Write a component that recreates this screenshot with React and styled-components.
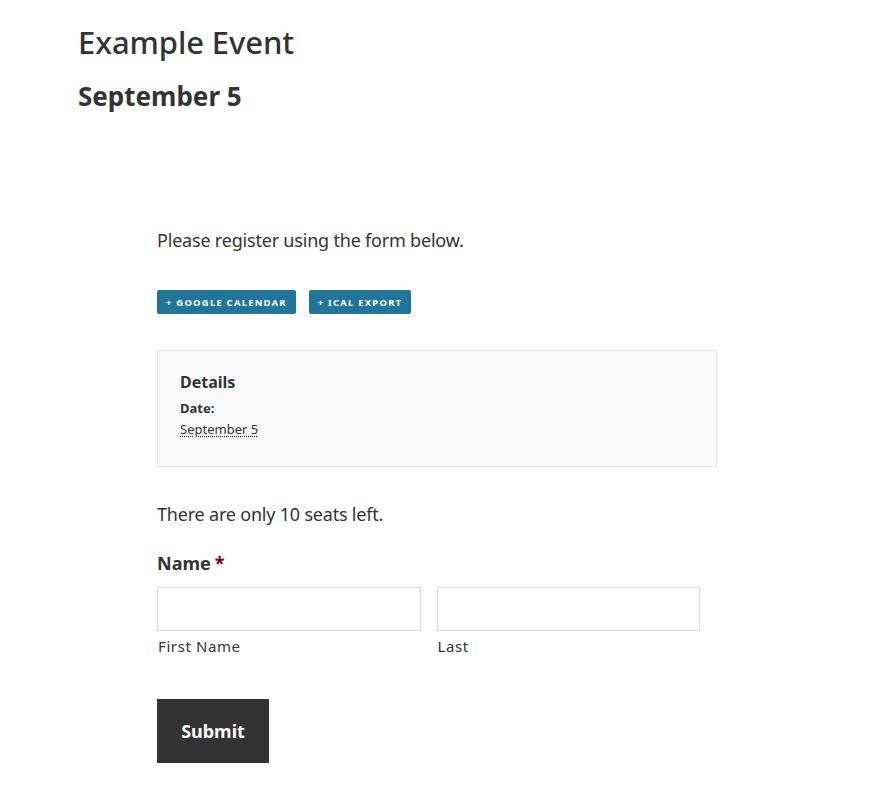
import React from "react";
import styled, { createGlobalStyle } from "styled-components";

const Global = createGlobalStyle`
  html, body { margin: 0; padding: 0; background: #fff; }
  body { font-family: "Source Sans Pro", "Noto Sans", "Open Sans", sans-serif; color: #333; }
  * { box-sizing: border-box; }
`;

const Page = styled.div`
  padding: 22px 0 40px 78px;
`;

const Title = styled.h1`
  margin: 0;
  font-size: 31px;
  font-weight: 500;
  line-height: 40px;
  letter-spacing: -0.1px;
`;

const DateHeading = styled.h2`
  margin: 17px 0 0;
  font-size: 26px;
  font-weight: 700;
  line-height: 34px;
  letter-spacing: 0;
`;

const Content = styled.div`
  margin: 113px 0 0 79px;
  width: 560px;
`;

const Para = styled.p`
  margin: 0;
  font-size: 18px;
  line-height: 28px;
  letter-spacing: -0.2px;
`;

const ButtonRow = styled.div`
  display: flex;
  gap: 13px;
  margin-top: 36px;
`;

const CalButton = styled.a`
  display: inline-flex;
  align-items: center;
  height: 24px;
  padding: 0 9px;
  background: #21759b;
  color: #fff;
  border-radius: 2px;
  font-size: 9.5px;
  font-weight: 700;
  letter-spacing: 1.2px;
  text-transform: uppercase;
  text-decoration: none;
`;

const DetailsBox = styled.div`
  margin-top: 36px;
  background: #f9f9f9;
  border: 1px solid #e6e6e6;
  height: 117px;
  padding: 20px 22px;
`;

const DetailsTitle = styled.h3`
  margin: 0;
  font-size: 16px;
  font-weight: 700;
  line-height: 22px;
`;

const DtLabel = styled.div`
  margin-top: 7px;
  font-size: 13px;
  font-weight: 700;
  line-height: 17px;
`;

const DtValue = styled.abbr`
  display: inline-block;
  margin-top: 2px;
  font-size: 13px;
  line-height: 17px;
  text-decoration: underline dotted;
  text-underline-offset: 2px;
`;

const Seats = styled(Para)`
  margin-top: 33px;
`;

const FieldLabel = styled.div`
  margin-top: 22px;
  font-size: 18px;
  font-weight: 700;
  line-height: 26px;
`;

const Req = styled.span`
  color: #790000;
  margin-left: 4px;
`;

const NameRow = styled.div`
  display: flex;
  gap: 16px;
  margin-top: 11px;
  width: 543px;
`;

const NameCol = styled.div`
  flex: 1;
  display: flex;
  flex-direction: column;
`;

const Input = styled.input`
  height: 44px;
  width: 100%;
  border: 1px solid #dcdcdc;
  background: #fff;
  font: inherit;
  padding: 0 8px;
`;

const SubLabel = styled.label`
  margin-top: 5px;
  padding-left: 1px;
  font-size: 15px;
  line-height: 20px;
  letter-spacing: 0.6px;
`;

const Submit = styled.button`
  margin-top: 43px;
  width: 112px;
  height: 64px;
  border: none;
  background: #333;
  color: #fff;
  font-family: inherit;
  font-size: 18px;
  font-weight: 700;
  cursor: pointer;
`;

export default function App() {
  return (
    <>
      <Global />
      <Page>
        <Title>Example Event</Title>
        <DateHeading>September 5</DateHeading>
        <Content>
          <Para>Please register using the form below.</Para>
          <ButtonRow>
            <CalButton href="#">+ Google Calendar</CalButton>
            <CalButton href="#">+ iCal Export</CalButton>
          </ButtonRow>
          <DetailsBox>
            <DetailsTitle>Details</DetailsTitle>
            <DtLabel>Date:</DtLabel>
            <DtValue title="2024-09-05">September 5</DtValue>
          </DetailsBox>
          <Seats>There are only 10 seats left.</Seats>
          <FieldLabel>
            Name<Req>*</Req>
          </FieldLabel>
          <NameRow>
            <NameCol>
              <Input type="text" />
              <SubLabel>First Name</SubLabel>
            </NameCol>
            <NameCol>
              <Input type="text" />
              <SubLabel>Last</SubLabel>
            </NameCol>
          </NameRow>
          <Submit type="button">Submit</Submit>
        </Content>
      </Page>
    </>
  );
}
